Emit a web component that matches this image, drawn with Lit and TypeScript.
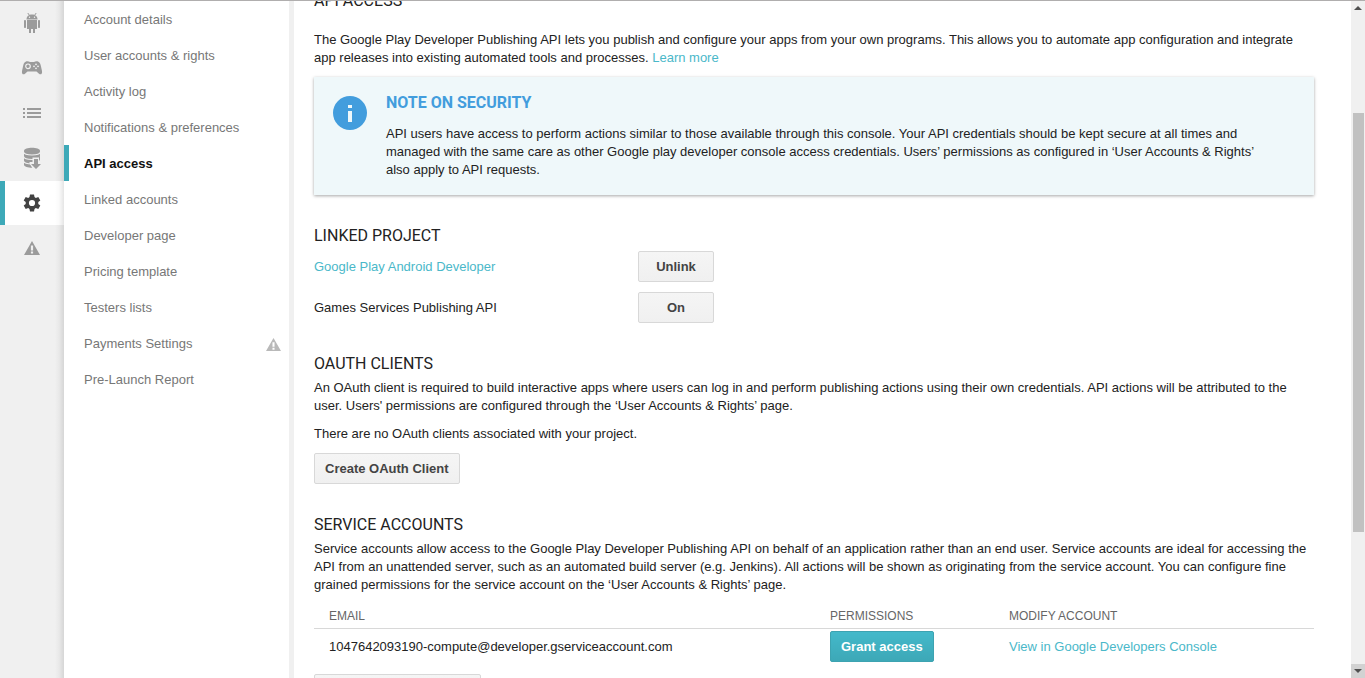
import { LitElement, html, css, svg } from "lit";
import { customElement } from "lit/decorators.js";
import { classMap } from "lit/directives/class-map.js";

const warning = svg`<path fill-rule="evenodd" d="M8 1 16 15H0ZM6.900 5.500v5h2.200v-5ZM6.900 11.500v2h2.200v-2Z"/>`;

const railIcons = [
  {
    label: "All applications",
    icon: html`<svg width="18" height="22" viewBox="0 0 18 22" aria-hidden="true">
      <path d="M4.800 1 6.300 3.200M13.200 1 11.700 3.200" stroke="currentColor" fill="none"/>
      <path d="M3.500 7.400C3.500 4.200 5.800 2.600 9 2.600s5.500 1.600 5.500 4.800Z"/>
      <circle cx="6.500" cy="5.300" r=".7" fill="#f0f0f0"/><circle cx="11.500" cy="5.300" r=".7" fill="#f0f0f0"/>
      <path d="M4 8h10v9H4ZM6 16h2v5H6ZM10 16h2v5h-2Z"/>
      <rect x="1" y="8" width="2" height="8" rx=".7"/><rect x="15" y="8" width="2" height="8" rx=".7"/>
    </svg>`,
  },
  {
    label: "Game services",
    icon: html`<svg width="22" height="16" viewBox="0 0 22 16" aria-hidden="true">
      <path d="M5 1.500C6.500.8 8 1.500 9 2h4c1-.5 2.500-1.200 4-.5C18.800 2.300 19.500 4 20 6.500l1 4.500c.5 3.500-1.500 4-3 2.700L15.500 11.500h-9L4 13.700C2.500 15 .5 14.500 1 11L2 6.500C2.500 4 3.200 2.300 5 1.500Z"/>
      <circle cx="7" cy="6.300" r="2.300" fill="none" stroke="#f0f0f0" stroke-width="1.200"/>
      <g fill="#f0f0f0"><circle cx="15" cy="4.300" r=".9"/><circle cx="15" cy="8.300" r=".9"/><circle cx="13" cy="6.300" r=".9"/><circle cx="17" cy="6.300" r=".9"/></g>
    </svg>`,
  },
  {
    label: "Order management",
    icon: html`<svg width="18" height="12" viewBox="0 0 18 12" aria-hidden="true">
      <path d="M0 1h2v2H0ZM4 1h14v2H4ZM0 5h2v2H0ZM4 5h14v2H4ZM0 9h2v2H0ZM4 9h14v2H4Z"/>
    </svg>`,
  },
  {
    label: "Download reports",
    icon: html`<svg width="18" height="22" viewBox="0 0 18 22" aria-hidden="true">
      <path d="M1 3.800C1-.3 17-.3 17 3.800v14c0 4-16 4-16 0Z"/>
      <path fill="none" stroke="#f0f0f0" stroke-width="1.100" d="M.5 5c1 4 16 4 17 0M.5 9.500c1 4 16 4 17 0M.5 14c1 4 16 4 17 0"/>
      <path fill="#f0f0f0" d="M9.500 10.500H18V22H10L6.500 16.500V15h3Z"/>
      <path d="M11 12h4v5h3l-5 5-5-5h3Z"/>
      <path d="M16 9.800c.7-.3 1-.6 1-1v3.500c0 .8-.4 1.200-1 1.500Z"/>
    </svg>`,
  },
  {
    label: "Settings",
    selected: true,
    icon: html`<svg width="22" height="22" viewBox="1 1 22 22" aria-hidden="true">
      <path fill-rule="evenodd" d="M10 3.500h4l.5 2.600 1.300.8 2.500-.9 2 3.400-2 1.700v1.800l2 1.700-2 3.400-2.500-.9-1.300.8-.5 2.600h-4l-.5-2.600-1.300-.8-2.500.9-2-3.400 2-1.700v-1.800l-2-1.700 2-3.400 2.500.9 1.300-.8ZM12 8.900a3.100 3.100 0 1 0 0 6.200 3.100 3.100 0 0 0 0-6.200Z"/>
    </svg>`,
  },
  {
    label: "Alerts",
    icon: html`<svg width="16" height="16" viewBox="0 0 16 16" aria-hidden="true">${warning}</svg>`,
  },
];

const sections = [
  "Account details",
  "User accounts & rights",
  "Activity log",
  "Notifications & preferences",
  "API access",
  "Linked accounts",
  "Developer page",
  "Pricing template",
  "Testers lists",
  "Payments Settings",
  "Pre-Launch Report",
];

@customElement("app-root")
export class AppRoot extends LitElement {
  static styles = css`
    :host {
      display: flex;
      height: 100vh;
      box-sizing: border-box;
      border-top: 1px solid #b0aeae;
      overflow: hidden;
      background: #fff;
      color: #222;
      font: 13px/18px "Liberation Sans", Arial, sans-serif;
    }
    a { color: #4ab8c9; text-decoration: none; }
    p, h1, h2 { margin: 0; }
    h1, h2 { font: 400 16px/20px Roboto, sans-serif; }
    svg { display: block; fill: currentColor; }

    .rail {
      flex: none;
      width: 64px;
      display: flex;
      flex-direction: column;
      gap: 1px;
      background: linear-gradient(to left, rgba(0, 0, 0, 0.11), rgba(0, 0, 0, 0.03) 5px, transparent 9px) #f0f0f0;
    }
    .rail-item {
      display: flex;
      align-items: center;
      justify-content: center;
      height: 44px;
      color: #9b9b9b;
    }
    .rail-item.selected {
      color: #424242;
      background: linear-gradient(to left, rgba(0, 0, 0, 0.1), rgba(0, 0, 0, 0.02) 5px, transparent 9px) #fff;
      box-shadow: inset 5px 0 #3da9b8;
    }
    .sections {
      flex: none;
      width: 225px;
      border-right: 5px solid #f0f0f0;
    }
    .section {
      display: flex;
      align-items: center;
      justify-content: space-between;
      box-sizing: border-box;
      height: 36px;
      padding: 2px 8px 0 20px;
      color: #777;
    }
    .section.selected {
      color: #111;
      font-weight: bold;
      box-shadow: inset 5px 0 #3da9b8;
    }
    .section svg { color: #b9b9b9; }

    .content {
      flex: 1;
      min-width: 0;
      overflow: hidden;
      padding: 0 20px;
    }
    .column {
      max-width: 1000px;
      margin-top: -10px;
    }
    .intro { margin: 20px 0 10px; }
    .note {
      display: flex;
      gap: 16px;
      padding: 16px 48px 16px 16px;
      background: #eff8fa;
      box-shadow: 0 1px 3px rgba(0, 0, 0, 0.35);
    }
    .note-icon { flex: none; color: #429ddd; }
    .note h2 { margin-bottom: 12px; color: #429ddd; font-weight: 700; }
    .linked { margin-top: 31px; }
    .row {
      display: grid;
      grid-template-columns: 324px 76px;
      align-items: center;
      margin-top: 10px;
    }
    .linked h2 + .row { margin-top: 5px; }
    .block { margin-top: 31px; }
    .block h2 { margin-bottom: 5px; }
    .block p + p { margin: 10px 0; }
    button {
      height: 31px;
      padding: 0 10px;
      border: 1px solid #d8d8d8;
      border-radius: 2px;
      background: linear-gradient(#f5f5f5, #f0f0f0);
      color: #444;
      font: bold 13px/18px "Liberation Sans", Arial, sans-serif;
    }
    button.primary {
      border-color: #3da3b1;
      background: linear-gradient(#43b9ca, #3da8b7);
      color: #fff;
    }
    table {
      width: 100%;
      margin: 11px 0 12px;
      table-layout: fixed;
      border-collapse: collapse;
      text-align: left;
    }
    th {
      height: 21px;
      padding: 0 0 2px 15px;
      border-bottom: 1px solid #d8d8d8;
      color: #666;
      font-size: 12px;
      font-weight: normal;
    }
    td { padding: 2px 0 0 15px; }
    .email { width: 486px; }
    .permissions { width: 164px; }

    .scrollbar {
      flex: none;
      width: 14px;
      display: flex;
      flex-direction: column;
      background: #f0f0f0;
    }
    .arrow {
      height: 14px;
      display: grid;
      place-items: center;
      color: #505050;
    }
    .arrow.down { background: #d2d2d2; }
    .track {
      flex: 1;
      display: grid;
      grid-template-rows: 98fr 419fr 132fr;
      padding: 0 1px 0 2px;
    }
    .thumb { grid-row: 2; background: #c1c1c1; }
  `;

  render() {
    return html`
      <nav class="rail" aria-label="Console">
        ${railIcons.map(
          (item) => html`<a href="#" aria-label=${item.label}
            class=${classMap({ "rail-item": true, selected: !!item.selected })}>${item.icon}</a>`,
        )}
      </nav>
      <nav class="sections" aria-label="Settings">
        ${sections.map(
          (name) => html`<a href="#" class=${classMap({ section: true, selected: name === "API access" })}
            >${name}${name === "Payments Settings"
              ? html`<svg width="15" height="15" viewBox="0 0 16 16" aria-hidden="true">${warning}</svg>`
              : ""}</a>`,
        )}
      </nav>
      <main class="content">
        <div class="column">
          <h1>API ACCESS</h1>
          <p class="intro">
            The Google Play Developer Publishing API lets you publish and configure your apps from your own programs.
            This allows you to automate app configuration and integrate app releases into existing automated tools and
            processes. <a href="#">Learn more</a>
          </p>
          <section class="note">
            <svg class="note-icon" width="40" height="40" viewBox="0 0 40 40" aria-hidden="true">
              <circle cx="20" cy="20" r="17"/>
              <path fill="#eff8fa" d="M18 12h4v3h-4ZM18 18h4v11h-4Z"/>
            </svg>
            <div>
              <h2>NOTE ON SECURITY</h2>
              <p>
                API users have access to perform actions similar to those available through this console. Your API
                credentials should be kept secure at all times and managed with the same care as other Google play
                developer console access credentials. Users’ permissions as configured in ‘User Accounts &amp; Rights’
                also apply to API requests.
              </p>
            </div>
          </section>
          <section class="linked">
            <h2>LINKED PROJECT</h2>
            <div class="row"><a href="#">Google Play Android Developer</a><button>Unlink</button></div>
            <div class="row"><span>Games Services Publishing API</span><button>On</button></div>
          </section>
          <section class="block">
            <h2>OAUTH CLIENTS</h2>
            <p>
              An OAuth client is required to build interactive apps where users can log in and perform publishing
              actions using their own credentials. API actions will be attributed to the user. Users' permissions are
              configured through the ‘User Accounts &amp; Rights’ page.
            </p>
            <p>There are no OAuth clients associated with your project.</p>
            <button>Create OAuth Client</button>
          </section>
          <section class="block">
            <h2>SERVICE ACCOUNTS</h2>
            <p>
              Service accounts allow access to the Google Play Developer Publishing API on behalf of an application
              rather than an end user. Service accounts are ideal for accessing the API from an unattended server, such
              as an automated build server (e.g. Jenkins). All actions will be shown as originating from the service
              account. You can configure fine grained permissions for the service account on the ‘User Accounts &amp;
              Rights’ page.
            </p>
            <table>
              <thead>
                <tr>
                  <th class="email" scope="col">EMAIL</th>
                  <th class="permissions" scope="col">PERMISSIONS</th>
                  <th scope="col">MODIFY ACCOUNT</th>
                </tr>
              </thead>
              <tbody>
                <tr>
                  <td>1047642093190-compute@developer.gserviceaccount.com</td>
                  <td><button class="primary">Grant access</button></td>
                  <td><a href="#">View in Google Developers Console</a></td>
                </tr>
              </tbody>
            </table>
            <button>Create Service Account</button>
          </section>
        </div>
      </main>
      <div class="scrollbar" aria-hidden="true">
        <div class="arrow"><svg width="8" height="4" viewBox="0 0 8 4"><path d="M0 4 4 0l4 4Z"/></svg></div>
        <div class="track"><div class="thumb"></div></div>
        <div class="arrow down"><svg width="8" height="4" viewBox="0 0 8 4"><path d="M0 0h8L4 4Z"/></svg></div>
      </div>
    `;
  }
}
